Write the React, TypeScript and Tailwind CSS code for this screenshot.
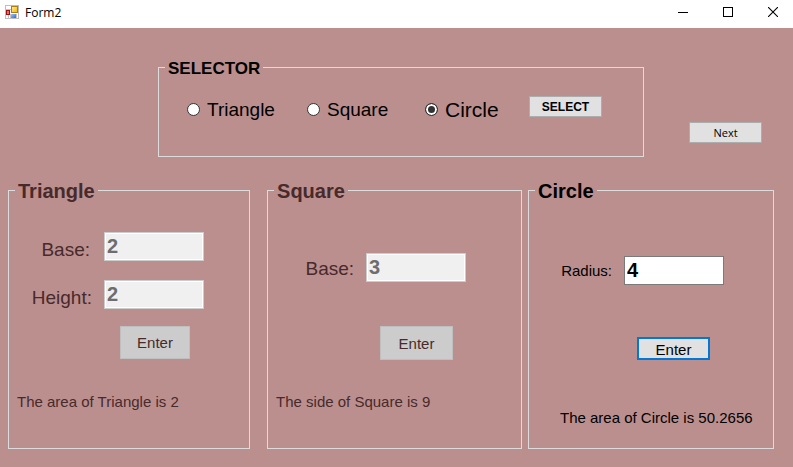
import React, { useState } from "react";

const shapes = ["Triangle", "Square", "Circle"] as const;
type Shape = (typeof shapes)[number];

const radioSpacing: Record<Shape, string> = {
  Triangle: "w-[120px] text-[19px]",
  Square: "w-[118px] text-[19px]",
  Circle: "w-[104px] text-[21px]",
};

function GroupBox({
  title,
  size = "text-xl",
  className = "",
  disabled = false,
  children,
}: {
  title: string;
  size?: string;
  className?: string;
  disabled?: boolean;
  children: React.ReactNode;
}) {
  return (
    <fieldset
      disabled={disabled}
      className={`min-w-0 border border-[#dcdcdc] ${disabled ? "text-[#472a2b]" : "text-black"} ${className}`}
    >
      <legend className={`ml-[6px] px-[3px] pt-[2px] font-bold leading-[21px] ${size}`}>{title}</legend>
      {children}
    </fieldset>
  );
}

function Field({
  id,
  label,
  value,
  labelClass,
  rowClass = "items-center",
}: {
  id: string;
  label: string;
  value: string;
  labelClass: string;
  rowClass?: string;
}) {
  return (
    <div className={`flex ${rowClass}`}>
      <label htmlFor={id} className={`shrink-0 text-right leading-[22px] ${labelClass}`}>
        {label}
      </label>
      <input
        id={id}
        type="text"
        defaultValue={value}
        className="h-[29px] w-[100px] border border-[#7a7a7a] bg-white px-[2px] text-xl font-bold leading-[22px] text-black outline-none disabled:border-[#cccccc] disabled:bg-[#f0f0f0] disabled:text-[#6d6d6d] disabled:shadow-[inset_0_0_0_1px_white]"
      />
    </div>
  );
}

function TitleBar() {
  return (
    <header className="flex h-7 items-stretch bg-white text-black">
      <div className="flex flex-1 items-center gap-[6px] pl-[5px]">
        <svg width="14" height="14" viewBox="0 0 14 14" className="mb-1" aria-hidden="true">
          <defs>
            <linearGradient id="gold" x1="0" y1="0" x2="1" y2="1">
              <stop offset="0" stopColor="#fff3a0" />
              <stop offset="1" stopColor="#eeb000" />
            </linearGradient>
            <linearGradient id="blue" x1="0" y1="0" x2="1" y2="1">
              <stop offset="0" stopColor="#9cc4ff" />
              <stop offset="1" stopColor="#2b6ad8" />
            </linearGradient>
          </defs>
          <rect x="0.5" y="0.5" width="13" height="13" fill="#fff" stroke="#bdbdbd" />
          <path d="M0 4.5H6M3.5 10V14M5.5 9V14M11.5 9V14" stroke="#c4c4c4" />
          <rect x="1" y="5" width="4" height="5" fill="#a01010" />
          <rect x="2" y="6" width="2" height="3" fill="#e86a6a" />
          <rect x="6.5" y="1.5" width="6" height="6" fill="url(#gold)" stroke="#b07d10" />
          <rect x="6" y="9" width="5" height="4" fill="url(#blue)" />
        </svg>
        <h1 className="pb-[2px] font-['Open_Sans','Noto_Sans',sans-serif] text-xs">Form2</h1>
      </div>
      <button type="button" aria-label="Minimize" className="flex w-[45px] justify-center pt-[7px]">
        <svg width="10" height="11" viewBox="0 0 10 11" shapeRendering="crispEdges">
          <path d="M0 5.5H10" stroke="#000" />
        </svg>
      </button>
      <button type="button" aria-label="Maximize" className="flex w-[45px] justify-center pt-[7px]">
        <svg width="10" height="10" viewBox="0 0 10 10" shapeRendering="crispEdges">
          <rect x="0.5" y="0.5" width="9" height="9" fill="none" stroke="#000" />
        </svg>
      </button>
      <button type="button" aria-label="Close" className="flex w-[43px] justify-center pl-[3px] pt-[7px]">
        <svg width="10" height="10" viewBox="0 0 10 10">
          <path d="M0 0L10 10M10 0L0 10" stroke="#000" strokeWidth="1.1" />
        </svg>
      </button>
    </header>
  );
}

const smallButton = "h-[21px] w-[73px] shrink-0 border border-[#adadad] bg-[#e1e1e1] text-black";
const disabledButton = "border border-[#bfbfbf] bg-[#cccccc] pt-[2px] text-[15px]";

export default function App() {
  const [shape, setShape] = useState<Shape>("Circle");

  return (
    <div className="flex min-h-screen flex-col bg-[#bc8f8f] font-['Liberation_Sans',Arial,sans-serif]">
      <TitleBar />
      <main className="flex-1 pt-7">
        <div className="flex items-end gap-[45px] pl-[158px] pr-[31px]">
          <GroupBox title="SELECTOR" size="text-[17px]" className="flex-1">
            <div className="flex h-[77px] items-start pl-[28px] pt-[17px]">
              {shapes.map((name) => (
                <label
                  key={name}
                  className={`flex shrink-0 items-center gap-[7px] leading-[27px] ${radioSpacing[name]}`}
                >
                  <input
                    type="radio"
                    name="shape"
                    checked={shape === name}
                    onChange={() => setShape(name)}
                    className="size-[13px] appearance-none rounded-full border border-[#333333] bg-white checked:bg-[#333333] checked:shadow-[inset_0_0_0_2px_white]"
                  />
                  {name}
                </label>
              ))}
              <button type="button" className={`text-xs font-bold ${smallButton}`}>
                SELECT
              </button>
            </div>
          </GroupBox>
          <button
            type="button"
            className={`mb-[14px] font-['Open_Sans','Noto_Sans',sans-serif] text-[11px] leading-[19px] ${smallButton}`}
          >
            Next
          </button>
        </div>

        <div className="mt-[22px] flex pl-2 pr-[19px]">
          <GroupBox title="Triangle" disabled className="mr-[17px] flex-[242]">
            <div className="flex flex-col pb-9 pt-[30px]">
              <div className="flex flex-col gap-[19px]">
                <Field id="triangle-base" label="Base:" value="2" labelClass="w-[95px] pr-[14px] text-[19px]" rowClass="items-end" />
                <Field id="triangle-height" label="Height:" value="2" labelClass="w-[95px] pr-[12px] text-[19px]" rowClass="items-end" />
              </div>
              <button type="button" className={`ml-[111px] mt-[17px] h-[33px] w-[70px] ${disabledButton}`}>
                Enter
              </button>
              <p className="mt-[33px] pl-2 text-[15px] leading-5">The area of Triangle is 2</p>
            </div>
          </GroupBox>

          <GroupBox title="Square" disabled className="mr-[6px] flex-[255]">
            <div className="flex flex-col pt-[51px]">
              <Field id="square-base" label="Base:" value="3" labelClass="w-[98px] pr-[12px] pt-[2px] text-[19px]" />
              <button type="button" className={`ml-[112px] mt-[44px] h-[34px] w-[73px] ${disabledButton}`}>
                Enter
              </button>
              <p className="mt-8 pl-2 text-[15px] leading-5">The side of Square is 9</p>
            </div>
          </GroupBox>

          <GroupBox title="Circle" className="flex-[246]">
            <div className="flex flex-col pt-[54px]">
              <Field id="circle-radius" label="Radius:" value="4" labelClass="w-[95px] pr-[12px] text-[15px]" />
              <button
                type="button"
                className="ml-[108px] mt-[52px] h-[23px] w-[73px] border-2 border-[#0078d7] bg-[#e1e1e1] pt-[2px] text-[15px] leading-[17px]"
              >
                Enter
              </button>
              <p className="mt-12 pl-[31px] text-[15px] leading-5">The area of Circle is 50.2656</p>
            </div>
          </GroupBox>
        </div>
      </main>
    </div>
  );
}
